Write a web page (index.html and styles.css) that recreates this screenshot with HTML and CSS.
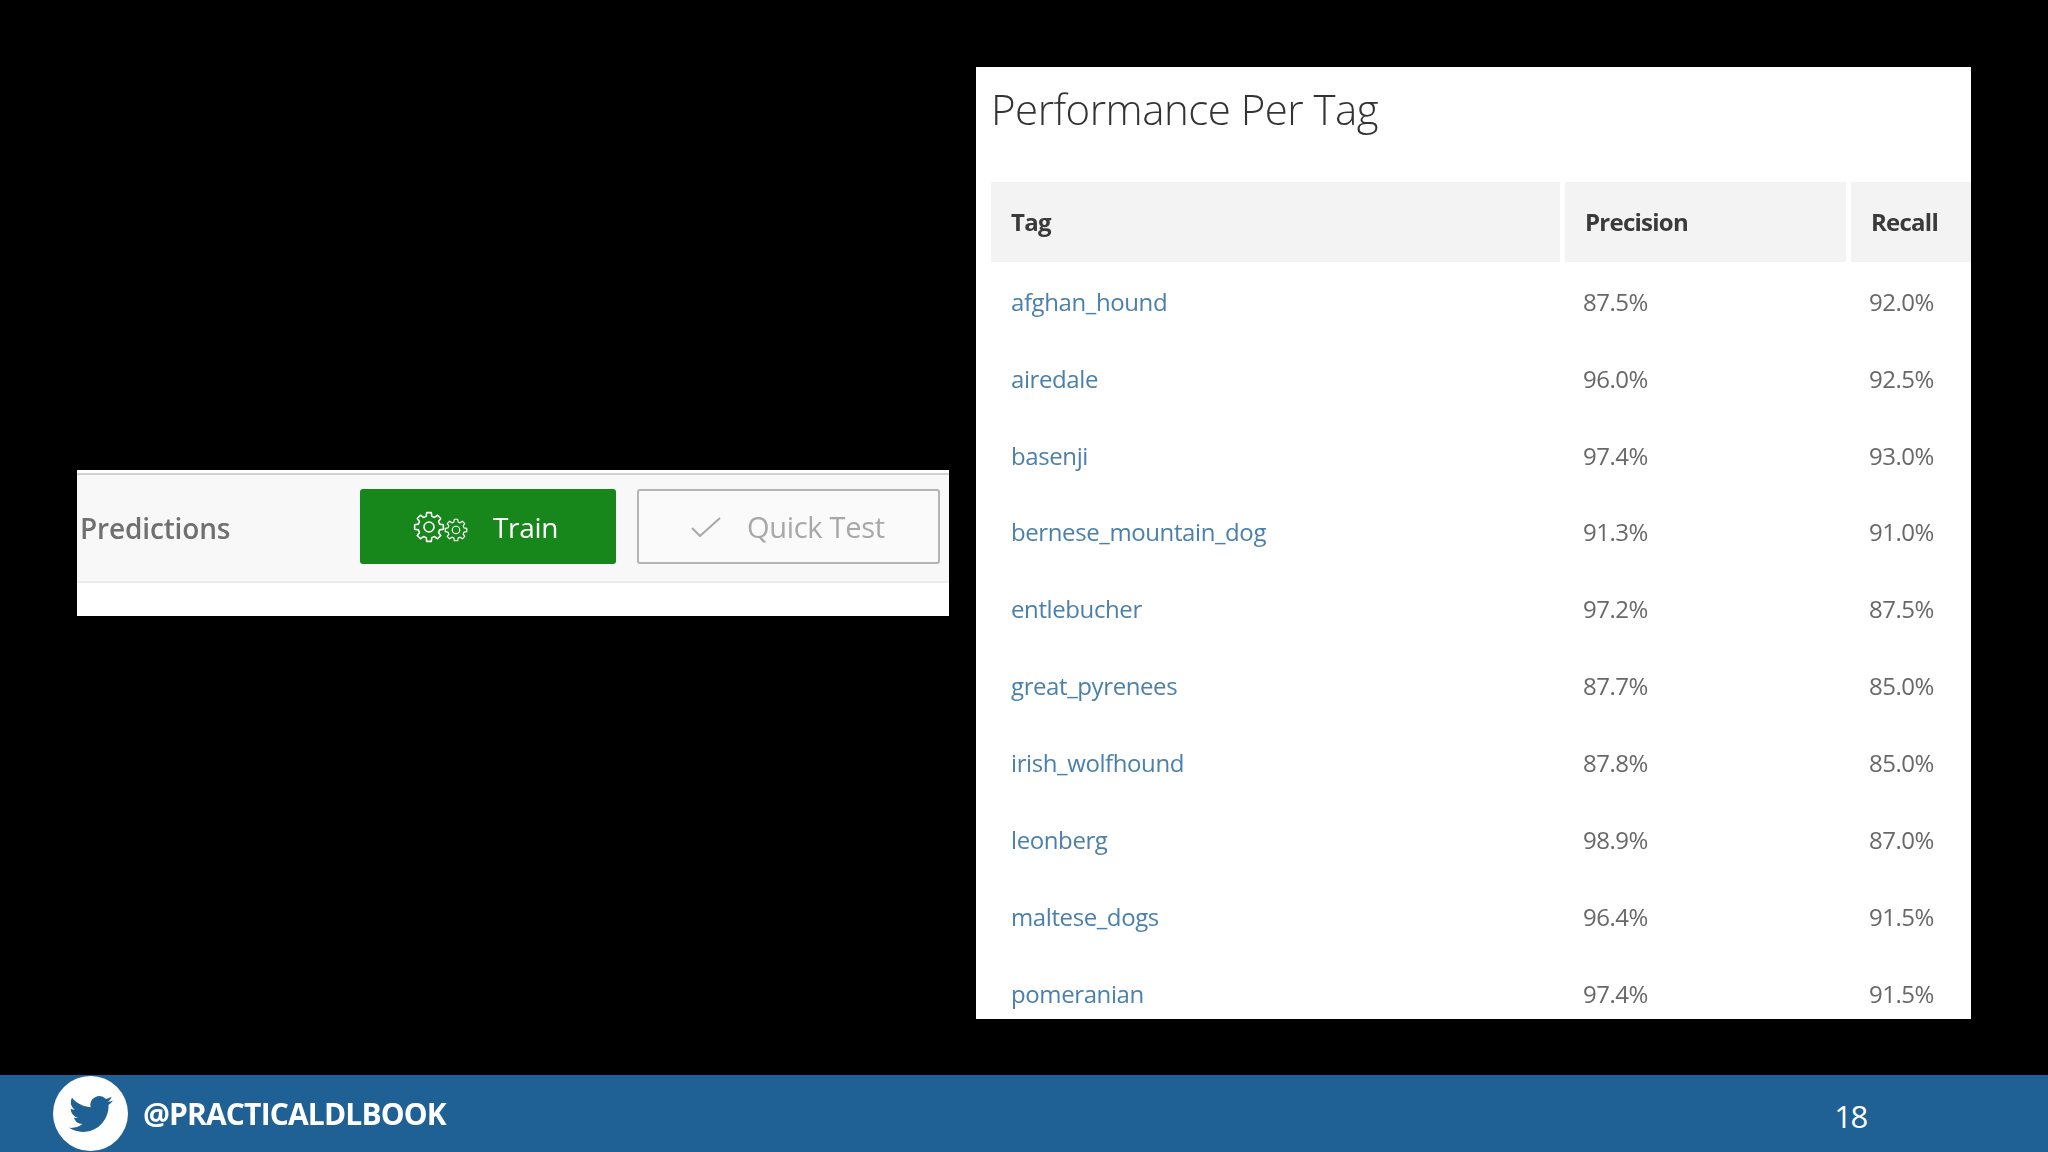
FILE: index.html
```html
<!DOCTYPE html>
<html lang="en">
<head>
<meta charset="utf-8">
<title>Performance Per Tag</title>
<link rel="stylesheet" href="styles.css">
</head>
<body>
<svg class="defs" aria-hidden="true">
  <symbol id="gear" viewBox="-16 -16 32 32">
    <polygon points="14.33,-2.27 14.33,2.27 10.63,2.85 9.53,5.5 11.73,8.52 8.52,11.73 5.5,9.53 2.85,10.63 2.27,14.33 -2.27,14.33 -2.85,10.63 -5.5,9.53 -8.52,11.73 -11.73,8.52 -9.53,5.5 -10.63,2.85 -14.33,2.27 -14.33,-2.27 -10.63,-2.85 -9.53,-5.5 -11.73,-8.52 -8.52,-11.73 -5.5,-9.53 -2.85,-10.63 -2.27,-14.33 2.27,-14.33 2.85,-10.63 5.5,-9.53 8.52,-11.73 11.73,-8.52 9.53,-5.5 10.63,-2.85"/>
    <circle r="5"/>
  </symbol>
</svg>
<main class="slide">
  <section class="toolbar-shot">
    <div class="toolbar">
      <h2 class="toolbar-title">Predictions</h2>
      <button class="btn btn-train" type="button">
        <svg class="gear gear-big"><use href="#gear"/></svg>
        <svg class="gear gear-small"><use href="#gear"/></svg>
        <span class="btn-label">Train</span>
      </button>
      <button class="btn btn-test" type="button">
        <svg class="check" viewBox="0 0 30 20"><path d="M1 11l8 8L29 1"/></svg>
        <span class="btn-label">Quick Test</span>
      </button>
    </div>
  </section>
  <section class="perf">
    <h1 class="perf-title">Performance Per Tag</h1>
    <table class="perf-table">
      <thead>
        <tr><th class="col-tag">Tag</th><th class="col-prec">Precision</th><th class="col-rec">Recall</th></tr>
      </thead>
      <tbody>
        <tr><td><a href="#">afghan_hound</a></td><td>87.5%</td><td>92.0%</td></tr>
        <tr><td><a href="#">airedale</a></td><td>96.0%</td><td>92.5%</td></tr>
        <tr><td><a href="#">basenji</a></td><td>97.4%</td><td>93.0%</td></tr>
        <tr><td><a href="#">bernese_mountain_dog</a></td><td>91.3%</td><td>91.0%</td></tr>
        <tr><td><a href="#">entlebucher</a></td><td>97.2%</td><td>87.5%</td></tr>
        <tr><td><a href="#">great_pyrenees</a></td><td>87.7%</td><td>85.0%</td></tr>
        <tr><td><a href="#">irish_wolfhound</a></td><td>87.8%</td><td>85.0%</td></tr>
        <tr><td><a href="#">leonberg</a></td><td>98.9%</td><td>87.0%</td></tr>
        <tr><td><a href="#">maltese_dogs</a></td><td>96.4%</td><td>91.5%</td></tr>
        <tr><td><a href="#">pomeranian</a></td><td>97.4%</td><td>91.5%</td></tr>
      </tbody>
    </table>
  </section>
</main>
<footer class="footer">
  <span class="bird-badge">
    <svg class="bird" viewBox="0 0 24 24"><path d="M23.953 4.57a10 10 0 01-2.825.775 4.958 4.958 0 002.163-2.723c-.951.555-2.005.959-3.127 1.184a4.92 4.92 0 00-8.384 4.482C7.69 8.095 4.067 6.13 1.64 3.162a4.822 4.822 0 00-.666 2.475c0 1.71.87 3.213 2.188 4.096a4.904 4.904 0 01-2.228-.616v.06a4.923 4.923 0 003.946 4.827 4.996 4.996 0 01-2.212.085 4.936 4.936 0 004.604 3.417 9.867 9.867 0 01-6.102 2.105c-.39 0-.779-.023-1.17-.067a13.995 13.995 0 007.557 2.209c9.053 0 13.998-7.496 13.998-13.985 0-.21 0-.42-.015-.63A9.935 9.935 0 0024 4.59z"/></svg>
  </span>
  <span class="handle">@PRACTICALDLBOOK</span>
  <span class="page-no">18</span>
</footer>
</body>
</html>
```

FILE: styles.css
```css
* { box-sizing: border-box; }
html, body { margin: 0; height: 100%; }
body {
  width: 2048px;
  height: 1152px;
  overflow: hidden;
  background: #000;
  display: flex;
  flex-direction: column;
  font-family: "Open Sans", "Noto Sans", sans-serif;
}
.defs { width: 0; height: 0; position: absolute; }

.slide {
  height: 1075px;
  display: flex;
  align-items: flex-start;
  padding-left: 77px;
  gap: 27px;
}

/* Left screenshot */
.toolbar-shot {
  width: 872px;
  height: 146px;
  margin-top: 470px;
  background: #fff;
  padding-top: 3px;
}
.toolbar {
  height: 110px;
  background: #f8f8f8;
  border-top: 2px solid #d2d2d2;
  border-bottom: 2px solid #ebebeb;
  display: flex;
  align-items: flex-start;
  padding-top: 14px;
  padding-left: 3px;
}
.toolbar-title {
  width: 280px;
  margin: 0;
  font-size: 28px;
  font-weight: 600;
  line-height: 78px;
  color: #707070;
  letter-spacing: -0.15px;
  filter: blur(0.4px);
}
.btn {
  height: 75px;
  border-radius: 3px;
  padding: 0;
  display: flex;
  align-items: center;
  font-family: inherit;
  font-size: 29px;
}
.btn-train {
  width: 256px;
  background: #17871b;
  border: 0;
  color: #fff;
  padding-left: 53px;
}
.btn-test {
  width: 303px;
  margin-left: 21px;
  background: #fafafa;
  border: 2px solid #b4b4b4;
  color: #a8a8a8;
  padding-left: 52px;
}
.gear { fill: none; stroke: #fff; stroke-width: 1.6; stroke-linejoin: round; }
.gear-big { width: 32px; height: 32px; }
.gear-small { width: 24px; height: 24px; margin-top: 6px; margin-left: -1px; }
.btn-label { filter: blur(0.4px); }
.btn-train .btn-label { margin-left: 25px; font-size: 28px; letter-spacing: -0.3px; }
.btn-test .btn-label { margin-left: 26px; letter-spacing: -0.3px; }
.check { width: 30px; height: 20px; fill: none; stroke: #a8a8a8; stroke-width: 2; }

/* Right screenshot */
.perf {
  width: 995px;
  height: 952px;
  margin-top: 67px;
  background: #fff;
  padding-left: 15px;
  overflow: hidden;
}
.perf-title {
  margin: 0;
  height: 115px;
  padding-top: 14px;
  font-size: 42px;
  line-height: 56px;
  font-weight: 300;
  color: #333;
  letter-spacing: -0.5px;
  filter: blur(0.4px);
}
.perf-table {
  width: 980px;
  table-layout: fixed;
  border-collapse: separate;
  border-spacing: 0;
  filter: blur(0.4px);
}
.col-tag { width: 574px; }
.col-prec { width: 286px; }
.col-rec { width: 120px; }
.perf-table th {
  height: 80px;
  padding: 0 0 2px 20px;
  background: #f3f3f3;
  border-right: 5px solid #fff;
  text-align: left;
  font-size: 24px;
  font-weight: 700;
  color: #3a3a3a;
  letter-spacing: -0.75px;
}
.perf-table .col-rec { border-right: 0; }
.perf-table td {
  height: 76.85px;
  padding: 2px 0 0 18px;
  font-size: 24px;
  color: #686868;
  letter-spacing: -0.5px;
}
.perf-table td:first-child { padding-left: 20px; }
.perf-table td a { color: #4a80ab; text-decoration: none; letter-spacing: -0.4px; }

/* Footer */
.footer {
  height: 77px;
  background: #1f6194;
  display: flex;
  align-items: center;
  padding-left: 53px;
}
.bird-badge {
  width: 75px;
  height: 75px;
  border-radius: 50%;
  background: #fff;
  display: flex;
  align-items: center;
  justify-content: center;
}
.bird { width: 44px; height: 44px; fill: #1f6194; }
.handle {
  margin-left: 15px;
  font-size: 30px;
  font-weight: 700;
  color: #fff;
  letter-spacing: -0.85px;
  filter: blur(0.3px);
}
.page-no {
  margin-left: auto;
  margin-right: 181px;
  margin-top: 4px;
  font-size: 31px;
  color: #fff;
  letter-spacing: -1.3px;
}
```
